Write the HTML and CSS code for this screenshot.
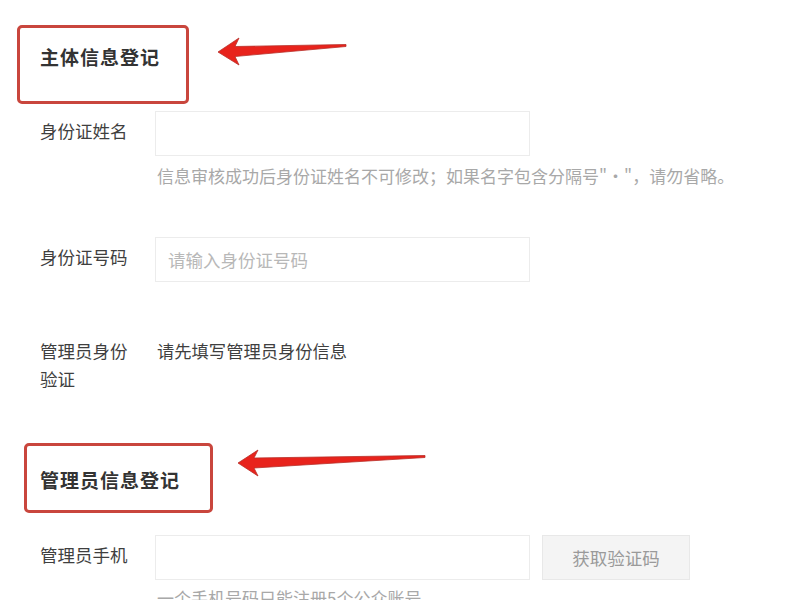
FILE: index.html
```html
<!DOCTYPE html>
<html lang="zh">
<head>
<meta charset="utf-8">
<link rel="stylesheet" href="styles.css">
</head>
<body>
<div class="page">
  <div class="head-row head-row-1">
    <div class="head-box box-1">主体信息登记</div>
    <svg class="arrow arrow-1" width="135" height="32" viewBox="0 0 135 32">
      <path d="M3 16 L24 2 L20 10.5 L131 8.5 L131 10.5 L20 20.5 L24 29 Z" fill="#e8231c" stroke="#b8302a" stroke-width="0.8" stroke-linejoin="round"/>
    </svg>
  </div>

  <div class="form-row row-name">
    <div class="label">身份证姓名</div>
    <div class="control">
      <div class="input"></div>
      <div class="hint">信息审核成功后身份证姓名不可修改；如果名字包含分隔号"·"，请勿省略。</div>
    </div>
  </div>

  <div class="form-row row-id">
    <div class="label">身份证号码</div>
    <div class="control">
      <div class="input"><span class="placeholder">请输入身份证号码</span></div>
    </div>
  </div>

  <div class="form-row row-verify">
    <div class="label">管理员身份<br>验证</div>
    <div class="control">
      <div class="value">请先填写管理员身份信息</div>
    </div>
  </div>

  <div class="head-row head-row-2">
    <div class="head-box box-2">管理员信息登记</div>
    <svg class="arrow arrow-2" width="195" height="34" viewBox="0 0 195 34">
      <path d="M3 18 L23 5 L19 13 L190 10.5 L190 12.5 L19 23 L23 31 Z" fill="#e8231c" stroke="#b8302a" stroke-width="0.8" stroke-linejoin="round"/>
    </svg>
  </div>

  <div class="form-row row-phone">
    <div class="label">管理员手机</div>
    <div class="control">
      <div class="input-line">
        <div class="input"></div>
        <div class="btn">获取验证码</div>
      </div>
      <div class="hint hint-phone">一个手机号码只能注册5个公众账号</div>
    </div>
  </div>
</div>
</body>
</html>
```

FILE: styles.css
```css
html, body {
  margin: 0;
  padding: 0;
  background: #ffffff;
}

body {
  font-family: "Noto Sans CJK SC", "Noto Sans", "Liberation Sans", sans-serif;
  color: #3a3a3a;
  overflow: hidden;
  height: 600px;
}

.page {
  padding-top: 25px;
}

.head-row {
  display: flex;
  align-items: flex-start;
}

.head-box {
  box-sizing: border-box;
  border: 3px solid #c9463d;
  border-radius: 5px;
  font-size: 19px;
  font-weight: bold;
  letter-spacing: 1px;
  color: #333333;
  line-height: 26px;
}

.box-1 {
  margin-left: 17px;
  width: 172px;
  height: 79px;
  padding: 16px 0 0 20px;
}

.box-2 {
  margin-left: 24px;
  width: 189px;
  height: 70px;
  padding: 21px 0 0 13px;
}

.arrow-1 {
  margin-left: 26px;
  margin-top: 11px;
}

.arrow-2 {
  margin-left: 22px;
  margin-top: 2px;
}

.head-row-2 {
  margin-top: 50px;
}

.form-row {
  display: grid;
  grid-template-columns: 115px auto;
  margin-left: 40px;
}

.label {
  font-size: 17.5px;
  line-height: 28px;
  padding-top: 6px;
  color: #3f3f3f;
}

.input {
  box-sizing: border-box;
  width: 375px;
  height: 45px;
  border: 1px solid #ececec;
  background: #ffffff;
  display: flex;
  align-items: center;
  padding-left: 12px;
}

.placeholder {
  font-size: 17.5px;
  color: #b8b8b8;
}

.hint {
  font-size: 17px;
  line-height: 24px;
  color: #a8a8a8;
  margin-top: 8px;
  margin-left: 2px;
  white-space: nowrap;
}

.row-name {
  margin-top: 7px;
}

.row-id {
  margin-top: 49px;
}

.row-verify {
  margin-top: 49px;
}

.value {
  font-size: 17.3px;
  line-height: 28px;
  padding-top: 6px;
  margin-left: 2px;
  color: #3f3f3f;
}

.row-phone {
  margin-top: 22px;
}

.input-line {
  display: flex;
  gap: 12px;
}

.btn {
  box-sizing: border-box;
  width: 148px;
  height: 45px;
  background: #f4f4f4;
  border: 1px solid #e8e8e8;
  color: #9a9a9a;
  font-size: 17.5px;
  display: flex;
  align-items: center;
  justify-content: center;
}

.hint-phone {
  margin-top: 6px;
}
```
